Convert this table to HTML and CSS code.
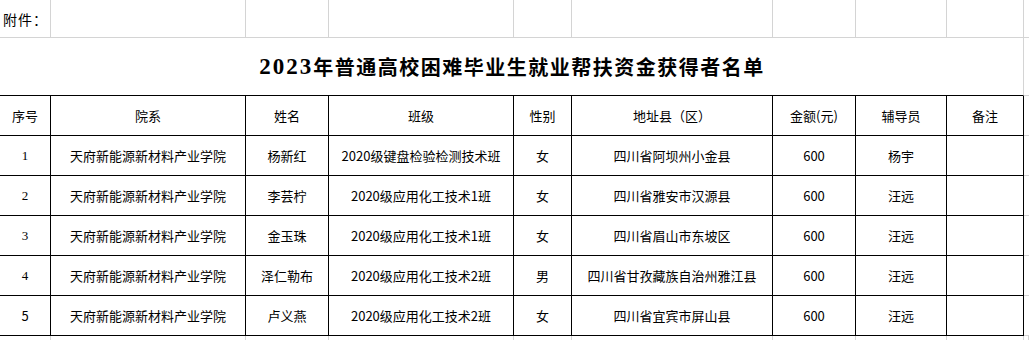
FILE: index.html
```html
<!DOCTYPE html>
<html lang="zh-CN">
<head>
<meta charset="utf-8">
<title>2023年普通高校困难毕业生就业帮扶资金获得者名单</title>
<link rel="stylesheet" href="styles.css">
</head>
<body>
<div class="sheet">
  <div class="c top left-text">附件：</div>
  <div class="c top"></div>
  <div class="c top"></div>
  <div class="c top"></div>
  <div class="c top"></div>
  <div class="c top"></div>
  <div class="c top"></div>
  <div class="c top"></div>
  <div class="c top"></div>
  <div class="c top last"></div>

  <div class="c title"><span class="num">2023</span>年普通高校困难毕业生就业帮扶资金获得者名单</div>
  <div class="c top last"></div>

  <div class="c b">序号</div>
  <div class="c b">院系</div>
  <div class="c b">姓名</div>
  <div class="c b">班级</div>
  <div class="c b">性别</div>
  <div class="c b">地址县（区）</div>
  <div class="c b">金额(元)</div>
  <div class="c b">辅导员</div>
  <div class="c b">备注</div>
  <div class="c top last"></div>

  <div class="c b serif">1</div>
  <div class="c b">天府新能源新材料产业学院</div>
  <div class="c b">杨新红</div>
  <div class="c b">2020级键盘检验检测技术班</div>
  <div class="c b">女</div>
  <div class="c b">四川省阿坝州小金县</div>
  <div class="c b">600</div>
  <div class="c b">杨宇</div>
  <div class="c b"></div>
  <div class="c top last"></div>

  <div class="c b serif">2</div>
  <div class="c b">天府新能源新材料产业学院</div>
  <div class="c b">李芸柠</div>
  <div class="c b">2020级应用化工技术1班</div>
  <div class="c b">女</div>
  <div class="c b">四川省雅安市汉源县</div>
  <div class="c b">600</div>
  <div class="c b">汪远</div>
  <div class="c b"></div>
  <div class="c top last"></div>

  <div class="c b serif">3</div>
  <div class="c b">天府新能源新材料产业学院</div>
  <div class="c b">金玉珠</div>
  <div class="c b">2020级应用化工技术1班</div>
  <div class="c b">女</div>
  <div class="c b">四川省眉山市东坡区</div>
  <div class="c b">600</div>
  <div class="c b">汪远</div>
  <div class="c b"></div>
  <div class="c top last"></div>

  <div class="c b serif">4</div>
  <div class="c b">天府新能源新材料产业学院</div>
  <div class="c b">泽仁勒布</div>
  <div class="c b">2020级应用化工技术2班</div>
  <div class="c b">男</div>
  <div class="c b">四川省甘孜藏族自治州雅江县</div>
  <div class="c b">600</div>
  <div class="c b">汪远</div>
  <div class="c b"></div>
  <div class="c top last"></div>

  <div class="c b">5</div>
  <div class="c b">天府新能源新材料产业学院</div>
  <div class="c b">卢义燕</div>
  <div class="c b">2020级应用化工技术2班</div>
  <div class="c b">女</div>
  <div class="c b">四川省宜宾市屏山县</div>
  <div class="c b">600</div>
  <div class="c b">汪远</div>
  <div class="c b"></div>
  <div class="c top last"></div>

  <div class="c tail"></div>
  <div class="c tail"></div>
  <div class="c tail"></div>
  <div class="c tail"></div>
  <div class="c tail"></div>
  <div class="c tail"></div>
  <div class="c tail"></div>
  <div class="c tail"></div>
  <div class="c tail"></div>
  <div class="c tail last"></div>
</div>
</body>
</html>
```

FILE: styles.css
```css
html, body {
  margin: 0;
  padding: 0;
  background: #ffffff;
}

.sheet {
  width: 1029px;
  height: 340px;
  overflow: hidden;
  display: grid;
  grid-template-columns: 51px 195px 83px 185px 58px 201px 83px 91px 77px 1fr;
  grid-template-rows: 38px 58px 40px 40px 40px 40px 40px 40px 1fr;
  font-family: "Noto Sans CJK SC", "Noto Sans", sans-serif;
  font-size: 13px;
  color: #000;
}

.c {
  box-sizing: border-box;
  display: flex;
  align-items: center;
  justify-content: center;
  white-space: nowrap;
  overflow: hidden;
}

.top {
  border-right: 1px solid #d4d4d4;
  border-bottom: 1px solid #d4d4d4;
}

.last {
  border-right: none;
}

.left-text {
  justify-content: flex-start;
  padding-left: 3px;
  font-size: 14px;
  letter-spacing: 1px;
}

.title {
  grid-column: 1 / 10;
  border-right: 1px solid #d4d4d4;
  border-bottom: 1px solid #000;
  font-family: "Noto Sans CJK SC", sans-serif;
  font-weight: 700;
  font-size: 20px;
  letter-spacing: 1.5px;
  padding-left: 1px;
}

.title .num {
  font-family: "Liberation Serif", serif;
  font-size: 23px;
  letter-spacing: 2px;
}

.b {
  border-right: 1px solid #000;
  border-bottom: 1px solid #000;
}

.serif {
  font-family: "Liberation Serif", "Noto Sans CJK SC", serif;
}

.tail {
  border-right: 1px solid #d4d4d4;
}
```
